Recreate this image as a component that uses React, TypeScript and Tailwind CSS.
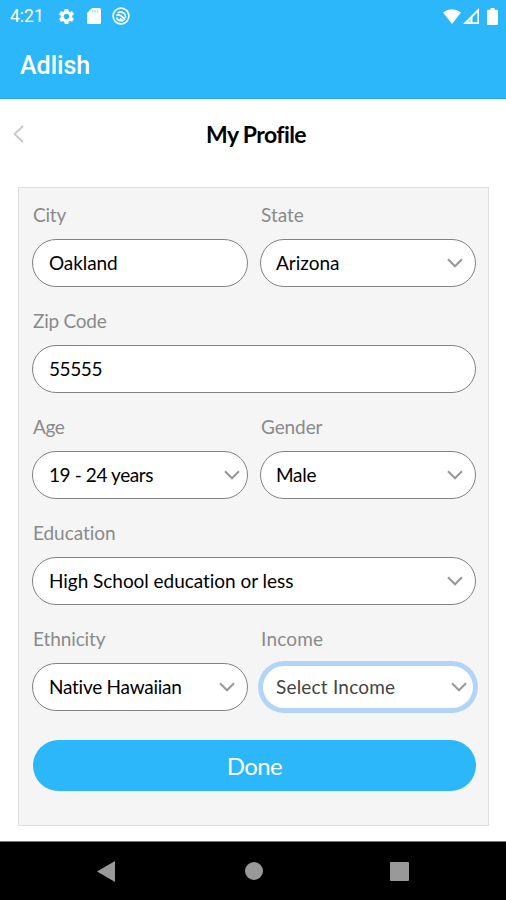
import { MdSettings } from "react-icons/md";

const sans = "font-[Lato,sans-serif] [font-variant-ligatures:none]";

function Chevron({ className }: { className: string }) {
  return (
    <svg className={`h-[10px] w-4 shrink-0 ${className}`} viewBox="0 0 16 10" fill="none" stroke="#999" strokeWidth="2.100">
      <path d="M1 1.200 8 8.200 15 1.200" />
    </svg>
  );
}

type FieldProps = {
  label: string;
  labelClass?: string;
  value: string;
  valueClass?: string;
  chevron?: string;
  focused?: boolean;
};

function Field({ label, labelClass = "", value, valueClass = "", chevron, focused }: FieldProps) {
  return (
    <div className="flex h-[84px] min-w-0 flex-1 flex-col justify-between">
      <label className={`block h-6 whitespace-nowrap pl-px text-[19px] leading-6 text-[#8a8a8a] ${labelClass}`}>{label}</label>
      <div
        className={`flex items-center justify-between rounded-full bg-white ${
          focused
            ? "-m-[2px] h-[52px] pl-[18px] text-[#444] ring-[5px] ring-[#b2d4f8] ring-inset"
            : "h-12 border border-[#828282] pl-4 text-black"
        }`}
      >
        <span className={`whitespace-nowrap text-[19px] leading-6 ${valueClass}`}>{value}</span>
        {chevron && <Chevron className={chevron} />}
      </div>
    </div>
  );
}

export default function App() {
  return (
    <div className={`flex h-[900px] w-[506px] flex-col overflow-hidden bg-white ${sans}`}>
      <header className="h-[99px] shrink-0 border-b border-[#22aaf0] bg-[#2bb7f9] font-[Roboto,sans-serif] text-white">
        <div className="flex h-8 items-center justify-between pl-[10px] pr-2">
          <div className="flex items-center">
            <span className="w-[47px] text-[17.500px] leading-8">4:21</span>
            <MdSettings className="size-[19px]" />
            <svg className="ml-[11px] h-4 w-[14px]" viewBox="0 0 14 16">
              <path fill="#fff" d="M5 0h7.500Q14 0 14 1.500v13Q14 16 12.500 16h-11Q0 16 0 14.500V5Z" />
              <path stroke="#9bdcfc" strokeWidth="1.200" d="M5.500 2v2.500M8 2v2.500M10.500 2v2.500" />
            </svg>
            <svg className="ml-[11px] size-[18px]" viewBox="0 0 18 18" fill="none" stroke="#fff">
              <circle cx="9" cy="9" r="7.900" strokeWidth="1.600" />
              <path strokeWidth="1.700" d="M5.500 6.200A4.800 4.800 0 0 1 13.300 11M4.300 8.600q2.700-1.600 4.500 0t4.300 4.200M4.400 10.500A4.800 4.800 0 0 0 10.500 13.400L8 11.500" />
            </svg>
          </div>
          <div className="flex items-center">
            <svg className="h-[15px] w-[18px]" viewBox="0 0 18 15" fill="#fff">
              <path d="M0 3.500Q9-3 18 3.500L9 15Z" />
            </svg>
            <svg className="ml-0.5 size-4" viewBox="0 0 16 16">
              <path fill="#fff" fillRule="evenodd" d="M16 0v16H0ZM14.400 4.300 9.500 9.300v4.900h4.900Z" />
              <path fill="#a5dffc" d="M7.700 10.600v3.600H4.200Z" />
            </svg>
            <svg className="ml-2 h-[17px] w-[11px]" viewBox="0 0 11 17" fill="#fff">
              <path d="M3.500 0h4v1.700H10q1 0 1 1V16q0 1-1 1H1q-1 0-1-1V2.700q0-1 1-1h2.500Z" />
            </svg>
          </div>
        </div>
        <h1 className="pl-5 pt-[18px] text-[25px] font-medium leading-[32px]">Adlish</h1>
      </header>
      <div className="grid h-[88px] shrink-0 grid-cols-[1fr_auto_1fr] pt-[19px]">
        <svg className="ml-[13px] mt-[7px] h-[18px] w-[11px]" viewBox="0 0 11 18" fill="none" stroke="#c8c8c8" strokeWidth="1.800">
          <path d="M10 1 1.500 9l8.500 8" />
        </svg>
        <h2 className="h-8 pl-[6px] text-[23px] font-bold leading-[33px] tracking-[-0.600px] text-black">My Profile</h2>
      </div>
      <main className="ml-[18px] flex h-[639px] w-[471px] shrink-0 flex-col gap-[22px] border border-[#dfdfdf] bg-[#f5f5f5] pl-[13px] pr-3 pt-[15px]">
        <div className="flex gap-3">
          <Field label="City" labelClass="tracking-[-0.200px]" value="Oakland" valueClass="tracking-[-0.100px]" />
          <Field label="State" value="Arizona" valueClass="-ml-px" chevron="mr-[12px]" />
        </div>
        <div className="flex">
          <Field label="Zip Code" labelClass="tracking-[-0.250px]" value="55555" valueClass="tracking-[-0.400px]" />
        </div>
        <div className="flex gap-3">
          <Field label="Age" labelClass="tracking-[-0.400px]" value="19 - 24 years" valueClass="tracking-[-0.400px]" chevron="mr-[7px]" />
          <Field label="Gender" labelClass="tracking-[-0.100px]" value="Male" valueClass="-ml-px tracking-[-0.300px]" chevron="mr-[12px]" />
        </div>
        <div className="flex">
          <Field label="Education" labelClass="tracking-[-0.050px]" value="High School education or less" valueClass="tracking-[-0.040px]" chevron="mr-[12px]" />
        </div>
        <div className="flex gap-3">
          <Field label="Ethnicity" labelClass="tracking-[-0.100px]" value="Native Hawaiian" valueClass="tracking-[-0.250px]" chevron="mr-[12px]" />
          <Field label="Income" labelClass="tracking-[0.200px]" value="Select Income" valueClass="tracking-[0.200px]" chevron="mr-[11px]" focused />
        </div>
        <button className="ml-px mt-[7px] h-[51px] shrink-0 rounded-full bg-[#2bb7f9] text-[24px] leading-[50px] tracking-[-0.600px] text-white">Done</button>
      </main>
      <nav className="mt-[15px] flex h-[59px] items-center border-t border-[#777] bg-black pl-[97px]">
        <svg className="h-[21px] w-[18px]" viewBox="0 0 18 21" fill="#999">
          <path d="M0 10.500 18 0v21Z" />
        </svg>
        <span className="ml-[130px] size-[18px] rounded-full bg-[#999]" />
        <span className="ml-[127px] size-[19px] rounded-[1px] bg-[#999]" />
      </nav>
    </div>
  );
}
